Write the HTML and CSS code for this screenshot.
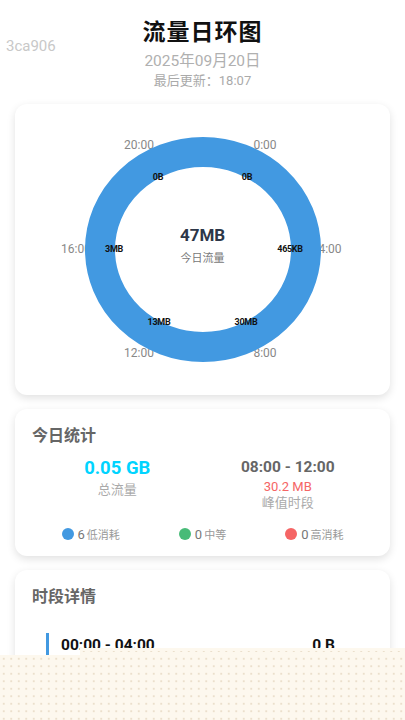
FILE: index.html
```html
<!DOCTYPE html>
<html lang="zh">
<head>
    <meta charset="UTF-8">
    <meta name="viewport" content="width=device-width, initial-scale=1.0">
    <title>流量日环图</title>
    <link rel="stylesheet" href="styles.css">
</head>
<body>
<div class="build-tag">3ca906</div>

<header class="page-header">
    <h1>流量日环图</h1>
    <div class="date">2025年09月20日</div>
    <div class="updated">最后更新：18:07</div>
</header>

<section class="card chart-card">
    <span class="hour" style="left:124px; top:41px">20:00</span>
    <span class="hour" style="left:250px; top:41px">0:00</span>
    <span class="hour" style="left:61px; top:145px">16:00</span>
    <span class="hour" style="left:315px; top:145px">4:00</span>
    <span class="hour" style="left:124px; top:249px">12:00</span>
    <span class="hour" style="left:250px; top:249px">8:00</span>

    <svg class="ring" width="374" height="291" viewBox="0 0 374 291">
        <ellipse cx="188" cy="145.5" rx="103" ry="97.5" fill="none" stroke="#4299e1" stroke-width="30"/>
    </svg>

    <span class="amount" style="left:143px; top:73px">0B</span>
    <span class="amount" style="left:232px; top:73px">0B</span>
    <span class="amount" style="left:99px; top:145px">3MB</span>
    <span class="amount" style="left:275px; top:145px">465KB</span>
    <span class="amount" style="left:144px; top:218px">13MB</span>
    <span class="amount" style="left:231px; top:218px">30MB</span>

    <div class="ring-center">
        <div class="total">47MB</div>
        <div class="total-label">今日流量</div>
    </div>
</section>

<section class="card stats-card">
    <h2>今日统计</h2>
    <div class="stats">
        <div class="stat">
            <div class="stat-value cyan">0.05 GB</div>
            <div class="stat-label">总流量</div>
        </div>
        <div class="stat">
            <div class="stat-value small">08:00 - 12:00</div>
            <div class="stat-sub">30.2 MB</div>
            <div class="stat-label">峰值时段</div>
        </div>
    </div>
    <div class="legend">
        <div class="legend-item"><span class="dot blue"></span><span class="count">6</span><span class="legend-text">低消耗</span></div>
        <div class="legend-item"><span class="dot green"></span><span class="count">0</span><span class="legend-text">中等</span></div>
        <div class="legend-item"><span class="dot red"></span><span class="count">0</span><span class="legend-text">高消耗</span></div>
    </div>
</section>

<section class="card detail-card">
    <h2>时段详情</h2>
    <div class="slot">
        <span class="slot-time">00:00 - 04:00</span>
        <span class="slot-amount">0 B</span>
    </div>
    <div class="slot">
        <span class="slot-time">04:00 - 08:00</span>
        <span class="slot-amount">465 KB</span>
    </div>
</section>

<div class="bottom-sheet"></div>

</body>
</html>
```

FILE: styles.css
```css
body {
    font-family: Roboto, 'Noto Sans CJK SC', sans-serif;
    background-color: #ffffff;
    color: #222;
    margin: 0;
    padding: 0 15px 20px;
    overflow: hidden;
}

.build-tag {
    position: absolute;
    left: 6px;
    top: 37px;
    font-size: 15px;
    line-height: 18px;
    color: #c8c8c8;
}

.page-header {
    text-align: center;
    padding-top: 17px;
    margin-bottom: 15px;
}

.page-header h1 {
    margin: 0;
    font-size: 23px;
    line-height: 32px;
    font-weight: 700;
    color: #111;
    letter-spacing: 1px;
}

.page-header .date {
    margin-top: 2px;
    font-size: 15.5px;
    line-height: 20px;
    color: #b0b0b0;
}

.page-header .updated {
    margin-top: 1px;
    font-size: 13px;
    line-height: 17px;
    color: #aaa;
}

.card {
    background-color: white;
    border-radius: 12px;
    box-shadow: 0 3px 9px rgba(0, 0, 0, 0.12);
    margin-bottom: 14px;
}

.card h2 {
    margin: 0;
    font-size: 16px;
    line-height: 22px;
    font-weight: 700;
    color: #666;
}

/* ring chart */
.chart-card {
    position: relative;
    height: 291px;
}

.ring {
    position: absolute;
    left: 0;
    top: 0;
}

.hour,
.amount {
    position: absolute;
    transform: translate(-50%, -50%);
    white-space: nowrap;
}

.hour {
    font-size: 12px;
    color: #888;
}

.amount {
    font-size: 9px;
    font-weight: 700;
    color: #111;
    letter-spacing: -0.3px;
}

.ring-center {
    position: absolute;
    left: 0;
    right: 0;
    top: 120px;
    text-align: center;
}

.total {
    font-size: 17px;
    line-height: 22px;
    font-weight: 700;
    color: #2d3748;
}

.total-label {
    margin-top: 5px;
    font-size: 11px;
    line-height: 16px;
    color: #777;
}

/* stats */
.stats-card {
    padding: 16px 17px 13px;
}

.stats {
    display: flex;
    margin-top: 10px;
}

.stat {
    flex: 1;
    text-align: center;
}

.stat-value {
    font-size: 18.5px;
    line-height: 23px;
    font-weight: 700;
    color: #666;
}

.stat-value.small {
    font-size: 15.5px;
    line-height: 21px;
}

.stat-value.cyan {
    color: #00d4ff;
}

.stat-label {
    font-size: 13px;
    line-height: 18px;
    color: #aaa;
    margin-top: 1px;
}

.stat-sub {
    font-size: 13px;
    line-height: 17px;
    color: #f56565;
    margin-top: 0;
}

.stat-sub + .stat-label {
    margin-top: -1px;
}

.legend {
    display: flex;
    justify-content: space-around;
    margin-top: 13px;
    height: 18px;
}

.legend-item {
    display: flex;
    align-items: center;
}

.dot {
    width: 12px;
    height: 12px;
    border-radius: 50%;
    margin-right: 4px;
}

.dot.blue { background-color: #4299e1; }
.dot.green { background-color: #48bb78; }
.dot.red { background-color: #f56565; }

.count {
    font-size: 13px;
    color: #777;
    margin-right: 2px;
}

.legend-text {
    font-size: 11px;
    color: #999;
}

/* details */
.detail-card {
    padding: 16px 17px 20px;
}

.slot {
    display: flex;
    justify-content: space-between;
    align-items: center;
    margin-top: 25px;
    padding: 3px 38px 3px 12px;
    border-left: 3px solid #4299e1;
    margin-left: 14px;
}

.slot + .slot {
    margin-top: 12px;
}

.slot-time,
.slot-amount {
    font-size: 15.5px;
    line-height: 18px;
    font-weight: 700;
    color: #111;
}

.bottom-sheet {
    position: fixed;
    left: 0;
    right: 0;
    bottom: 0;
    height: 65px;
    z-index: 5;
    background-color: #fdf8ee;
    background-image: radial-gradient(circle, #ebdfcc 0.7px, transparent 1px);
    background-size: 7.5px 7.5px;
}

.bottom-sheet::before {
    content: "";
    position: absolute;
    left: 80px;
    right: 0;
    top: -7px;
    height: 7px;
    background: inherit;
}
```
